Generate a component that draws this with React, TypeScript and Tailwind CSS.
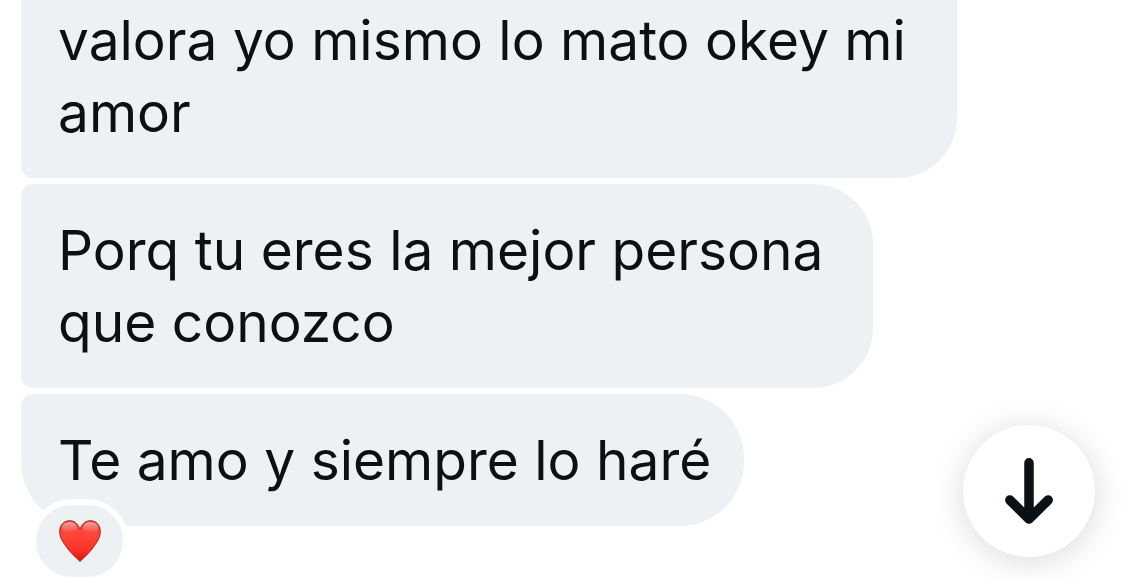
import React from 'react';

interface Message {
  text: string;
  width: string;
  shape: string;
  reaction?: boolean;
}

const messages: Message[] = [
  {
    text: 'valora yo mismo lo mato okey mi amor',
    width: 'max-w-[936px]',
    shape: 'pt-1 rounded-br-[60px] rounded-bl-xl',
  },
  {
    text: 'Porq tu eres la mejor persona que conozco',
    width: 'max-w-[852px]',
    shape: 'pt-[30px] rounded-r-[60px] rounded-l-xl',
  },
  {
    text: 'Te amo y siempre lo haré',
    width: 'max-w-[723px]',
    shape: 'pt-[30px] rounded-r-[64px] rounded-tl-xl rounded-bl-[64px]',
    reaction: true,
  },
];

const HeartIcon: React.FC = () => (
  <svg viewBox="0 0 42 42" className="w-[42px]" aria-hidden="true">
    <defs>
      <linearGradient id="heart" x1="0" y1="0" x2="0" y2="1">
        <stop offset="0%" stopColor="#e8483e" />
        <stop offset="35%" stopColor="#ff4539" />
        <stop offset="75%" stopColor="#fc3026" />
        <stop offset="100%" stopColor="#c9150f" />
      </linearGradient>
      <linearGradient id="shine" x1="0" y1="0" x2="0" y2="1">
        <stop offset="0%" stopColor="#fff" stopOpacity="0.5" />
        <stop offset="100%" stopColor="#fff" stopOpacity="0" />
      </linearGradient>
    </defs>
    <path
      d="M21 41.5C18 38 13 34.5 9 29C4.5 23 .7 18 .7 11.500C.7 5 5 .7 10.500 .7C15.500 .7 19 4 21 9C23 4 26.500 .7 31.500 .7C37 .7 41.300 5 41.300 11.500C41.300 18 37.500 23 33 29C29 34.500 24 38 21 41.500Z"
      fill="url(#heart)"
      stroke="#b01c18"
      strokeWidth="1"
    />
    <ellipse cx="10.500" cy="7.500" rx="7.500" ry="5.500" fill="url(#shine)" />
    <ellipse cx="31.500" cy="7.500" rx="7.500" ry="5.500" fill="url(#shine)" />
  </svg>
);

const MessageBubble: React.FC<Message> = ({ text, width, shape, reaction }) => (
  <div className={`relative w-full bg-[#edf1f4] pl-[37px] pr-6 pb-[30px] ${width} ${shape}`}>
    <p>{text}</p>
    {reaction && (
      <button
        aria-label="Reaction"
        className="absolute left-[9px] -bottom-[57px] flex h-[84px] w-[99px] items-center justify-center rounded-full border-[6px] border-white bg-[#edf1f4]"
      >
        <HeartIcon />
      </button>
    )}
  </div>
);

const App: React.FC = () => (
  <main
    className="overflow-hidden bg-white pl-[21px] pr-12 pb-[53px] text-[55px] leading-[72px] text-[#0b1014]"
    style={{ fontFamily: 'Inter, sans-serif' }}
  >
    <div className="flex flex-col gap-1.5">
      {messages.map((message) => (
        <MessageBubble key={message.text} {...message} />
      ))}
    </div>
    <button
      aria-label="Scroll to latest message"
      className="fixed right-[47px] bottom-[22px] flex h-[132px] w-[132px] items-center justify-center rounded-full bg-white shadow-[0_4px_32px_rgba(0,0,0,0.15)]"
    >
      <svg viewBox="0 0 48 66" className="w-12" fill="none" stroke="#0b1014" strokeWidth="9.500" aria-hidden="true">
        <path d="M24 4.800V60M4.800 42L24 61L43.200 42" strokeLinecap="round" strokeLinejoin="round" />
      </svg>
    </button>
  </main>
);

export default App;
